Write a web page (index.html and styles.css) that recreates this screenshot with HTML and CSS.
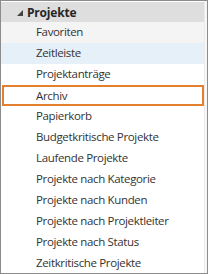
FILE: index.html
```html
<!DOCTYPE html>
<html lang="de">
<head>
  <meta charset="UTF-8">
  <title>Projekte</title>
  <link rel="stylesheet" href="styles.css">
</head>
<body>
  <div class="panel">
    <div class="tree">
      <div class="group-header">
        <svg class="twisty" width="6" height="6" viewBox="0 0 6 6"><polygon points="6,0 6,6 0,6" fill="#444"/></svg>
        <span>Projekte</span>
      </div>
      <ul class="views">
        <li class="hover">Favoriten</li>
        <li class="selected">Zeitleiste</li>
        <li>Projektanträge</li>
        <li class="focused">Archiv</li>
        <li>Papierkorb</li>
        <li>Budgetkritische Projekte</li>
        <li>Laufende Projekte</li>
        <li>Projekte nach Kategorie</li>
        <li>Projekte nach Kunden</li>
        <li>Projekte nach Projektleiter</li>
        <li>Projekte nach Status</li>
        <li>Zeitkritische Projekte</li>
      </ul>
    </div>
    <div class="edge"></div>
  </div>
</body>
</html>
```

FILE: styles.css
```css
* {
  box-sizing: border-box;
  margin: 0;
  padding: 0;
}

body {
  font-family: "Open Sans", "Noto Sans", sans-serif;
  background-color: #fff;
}

/* Panel frame */
.panel {
  width: 208px;
  height: 274px;
  border: 1px solid #8c8c8c;
  display: flex;
  overflow: hidden;
  background-color: #fff;
}

.tree {
  flex: 1;
  padding-top: 1px;
}

.edge {
  width: 3px;
  background-color: #f7f7f7;
  border-left: 1px solid #ececec;
}

/* Group header */
.group-header {
  height: 20px;
  background-color: #dedede;
  display: flex;
  align-items: center;
  padding-left: 16px;
  font-size: 12px;
  font-weight: bold;
  color: #262626;
  letter-spacing: -0.2px;
}

.twisty {
  margin-right: 4px;
  margin-top: 1px;
}

/* View list */
.views {
  list-style: none;
}

.views li {
  height: 21px;
  line-height: 20px;
  padding-left: 35px;
  font-size: 11.5px;
  letter-spacing: -0.35px;
  color: #333;
  white-space: nowrap;
}

.views li.hover {
  background-color: #f4f4f4;
}

.views li.selected {
  background-color: #e5f0f8;
}

.views li.focused {
  border: 2px solid #e3802f;
  margin-left: 1px;
  padding-left: 32px;
  line-height: 17px;
}
```
